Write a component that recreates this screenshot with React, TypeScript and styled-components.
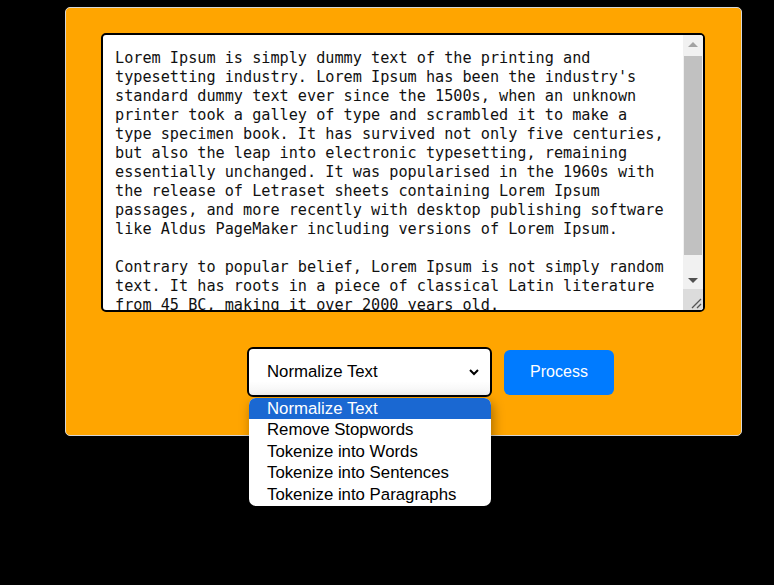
import React from "react";
import styled, { createGlobalStyle } from "styled-components";

const Global = createGlobalStyle`
  html, body { margin: 0; padding: 0; background: #000; }
  body { font-family: "Liberation Sans", Arial, sans-serif; }
  * { box-sizing: border-box; }
`;

const Page = styled.div`
  min-height: 585px;
  padding-top: 7px;
  background: #000;
`;

const Card = styled.div`
  margin-left: 65px;
  width: 677px;
  background: #ffa500;
  border: 1px solid #d6d6d6;
  border-radius: 5px;
  padding: 25px 36px 38px 35px;
`;

const EditorWrap = styled.div`
  position: relative;
  width: 604px;
  height: 279px;
`;

const TextArea = styled.textarea`
  display: block;
  width: 100%;
  height: 100%;
  border: 2px solid #000;
  border-radius: 5px;
  padding: 14px 32px 12px 12px;
  background: #fff;
  color: #111;
  font-family: "DejaVu Sans Mono", "Liberation Mono", monospace;
  font-size: 15.2px;
  line-height: 19px;
  overflow: hidden;
  resize: none;
  outline: none;
`;

const ScrollBar = styled.div`
  position: absolute;
  top: 2px;
  right: 2px;
  bottom: 2px;
  width: 20px;
  display: flex;
  flex-direction: column;
  background: #f1f1f1;
  border-top-right-radius: 3px;
  border-bottom-right-radius: 3px;
  overflow: hidden;
`;

const ArrowButton = styled.div`
  height: 17px;
  display: flex;
  align-items: center;
  justify-content: center;
  flex: none;
`;

const Track = styled.div`
  flex: 1;
  padding: 4px 1px 17px 1px;
  display: flex;
`;

const Thumb = styled.div`
  flex: 1;
  background: #c1c1c1;
`;

const Corner = styled.div`
  height: 21px;
  flex: none;
  background: #dcdcdc;
  display: flex;
  align-items: flex-end;
  justify-content: flex-end;
`;

const Row = styled.div`
  display: flex;
  align-items: center;
  gap: 12px;
  margin-top: 35px;
  padding-left: 146px;
`;

const SelectWrap = styled.div`
  position: relative;
`;

const SelectBox = styled.div`
  width: 245px;
  height: 50px;
  border: 2px solid #000;
  border-radius: 6px;
  background: linear-gradient(#fff 70%, #f3f3f3);
  display: flex;
  align-items: center;
  justify-content: space-between;
  padding: 0 9px 0 18px;
  font-size: 16.8px;
  color: #000;
`;

const Menu = styled.ul`
  position: absolute;
  top: calc(100% + 1px);
  left: 2px;
  width: 242px;
  margin: 0;
  padding: 0 0 1px;
  list-style: none;
  background: #fff;
  border-radius: 7px;
  overflow: hidden;
  box-shadow: 2px 4px 12px rgba(0, 0, 0, 0.35);
  z-index: 5;
`;

const Option = styled.li<{ $active?: boolean }>`
  height: 21.4px;
  line-height: 21.4px;
  padding-left: 18px;
  font-size: 16.8px;
  color: ${(p) => (p.$active ? "#fff" : "#000")};
  background: ${(p) => (p.$active ? "#1a68d2" : "transparent")};
`;

const Button = styled.button`
  width: 110px;
  height: 45px;
  border: none;
  border-radius: 6px;
  background: #007bff;
  color: #fff;
  font-family: "Liberation Sans", Arial, sans-serif;
  font-size: 16px;
  cursor: pointer;
`;

const TEXT = `Lorem Ipsum is simply dummy text of the printing and typesetting industry. Lorem Ipsum has been the industry's standard dummy text ever since the 1500s, when an unknown printer took a galley of type and scrambled it to make a type specimen book. It has survived not only five centuries, but also the leap into electronic typesetting, remaining essentially unchanged. It was popularised in the 1960s with the release of Letraset sheets containing Lorem Ipsum passages, and more recently with desktop publishing software like Aldus PageMaker including versions of Lorem Ipsum.

Contrary to popular belief, Lorem Ipsum is not simply random text. It has roots in a piece of classical Latin literature from 45 BC, making it over 2000 years old.`;

const OPTIONS = [
  "Normalize Text",
  "Remove Stopwords",
  "Tokenize into Words",
  "Tokenize into Sentences",
  "Tokenize into Paragraphs",
];

export default function App() {
  return (
    <Page>
      <Global />
      <Card>
        <EditorWrap>
          <TextArea defaultValue={TEXT} spellCheck={false} />
          <ScrollBar>
            <ArrowButton>
              <svg width="10" height="6" viewBox="0 0 10 6">
                <path d="M0 6L5 1l5 5z" fill="#a3a3a3" />
              </svg>
            </ArrowButton>
            <Track>
              <Thumb />
            </Track>
            <ArrowButton>
              <svg width="10" height="6" viewBox="0 0 10 6">
                <path d="M0 0l5 5 5-5z" fill="#505050" />
              </svg>
            </ArrowButton>
            <Corner>
              <svg width="14" height="14" viewBox="0 0 14 14">
                <path d="M3 12L12 3M8 12l4-4" stroke="#555" strokeWidth="1.3" fill="none" />
              </svg>
            </Corner>
          </ScrollBar>
        </EditorWrap>
        <Row>
          <SelectWrap>
            <SelectBox>
              <span>Normalize Text</span>
              <svg width="14" height="14" viewBox="0 0 14 14">
                <path d="M3 5l4 4 4-4" fill="none" stroke="#000" strokeWidth="2" />
              </svg>
            </SelectBox>
            <Menu>
              {OPTIONS.map((o, i) => (
                <Option key={o} $active={i === 0}>
                  {o}
                </Option>
              ))}
            </Menu>
          </SelectWrap>
          <Button>Process</Button>
        </Row>
      </Card>
    </Page>
  );
}
